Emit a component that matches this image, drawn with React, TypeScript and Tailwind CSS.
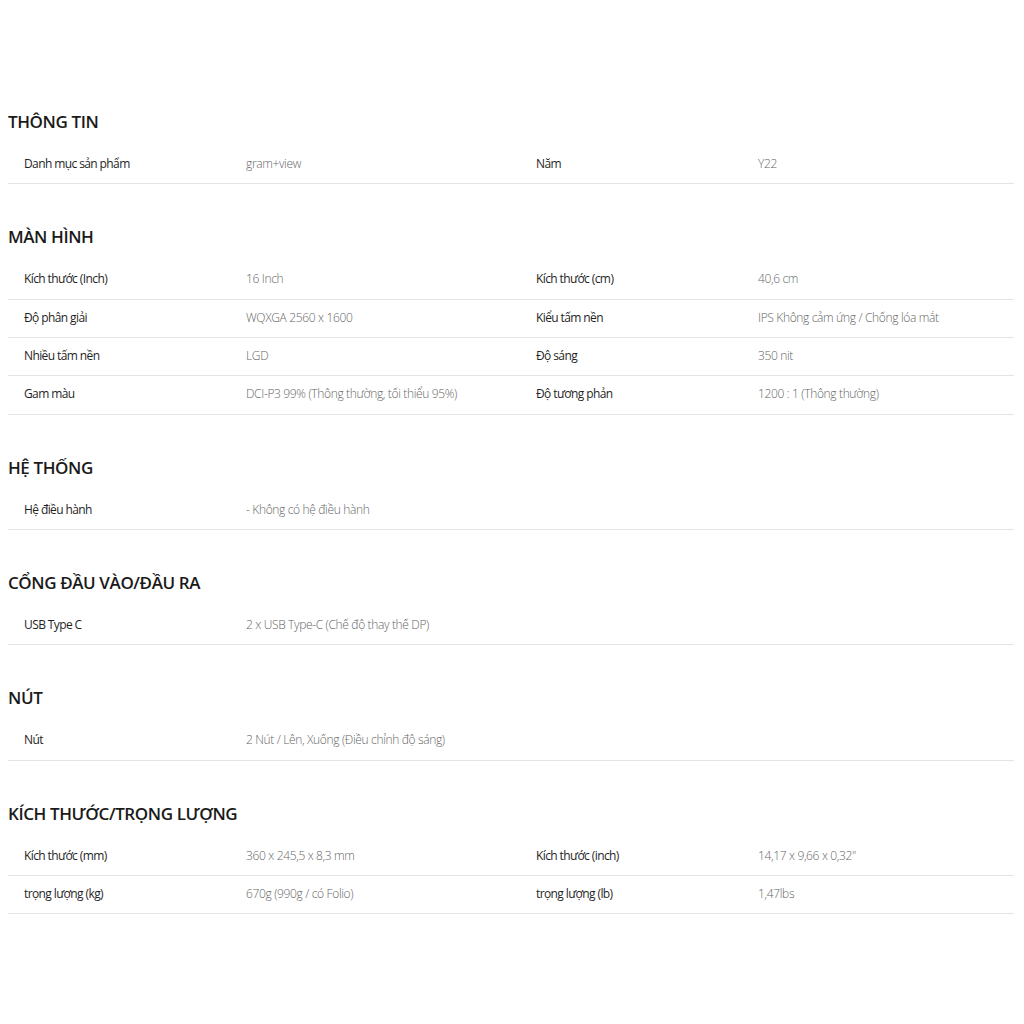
const font = { fontFamily: '"Open Sans", "Noto Sans", sans-serif' };

type Pair = [string, string];

const sections: { title: string; rows: Pair[][] }[] = [
  {
    title: 'THÔNG TIN',
    rows: [[['Danh mục sản phẩm', 'gram+view'], ['Năm', 'Y22']]],
  },
  {
    title: 'MÀN HÌNH',
    rows: [
      [['Kích thước (Inch)', '16 Inch'], ['Kích thước (cm)', '40,6 cm']],
      [['Độ phân giải', 'WQXGA 2560 x 1600'], ['Kiểu tấm nền', 'IPS Không cảm ứng / Chống lóa mắt']],
      [['Nhiều tấm nền', 'LGD'], ['Độ sáng', '350 nit']],
      [['Gam màu', 'DCI-P3 99% (Thông thường, tối thiểu 95%)'], ['Độ tương phản', '1200 : 1 (Thông thường)']],
    ],
  },
  {
    title: 'HỆ THỐNG',
    rows: [[['Hệ điều hành', '- Không có hệ điều hành']]],
  },
  {
    title: 'CỔNG ĐẦU VÀO/ĐẦU RA',
    rows: [[['USB Type C', '2 x USB Type-C (Chế độ thay thế DP)']]],
  },
  {
    title: 'NÚT',
    rows: [[['Nút', '2 Nút / Lên, Xuống (Điều chỉnh độ sáng)']]],
  },
  {
    title: 'KÍCH THƯỚC/TRỌNG LƯỢNG',
    rows: [
      [['Kích thước (mm)', '360 x 245,5 x 8,3 mm'], ['Kích thước (inch)', '14,17 x 9,66 x 0,32"']],
      [['trọng lượng (kg)', '670g (990g / có Folio)'], ['trọng lượng (lb)', '1,47lbs']],
    ],
  },
];

function Cell({ pair, right }: { pair?: Pair; right?: boolean }) {
  if (!pair) return <div />;
  return (
    <div className={`grid grid-cols-[222px_1fr] ${right ? 'pl-6' : 'pl-4'}`}>
      <div className="text-[12px] leading-5 font-medium tracking-[-0.6px] text-[#1f1f1f]">{pair[0]}</div>
      <div className="text-[12px] leading-5 font-light tracking-[-0.35px] text-[#666]">{pair[1]}</div>
    </div>
  );
}

export default function App() {
  return (
    <div className="min-h-screen bg-white px-2 pt-[110px] pb-24" style={font}>
      <div className="w-[1006px]">
        {sections.map((section, i) => (
          <section key={section.title} className={i > 0 ? 'mt-[41px]' : ''}>
            <h2 className="text-[17px] leading-6 font-semibold tracking-[-0.4px] text-[#1a1a1a]">{section.title}</h2>
            <div className="mt-3">
              {section.rows.map((row, j) => (
                <div
                  key={j}
                  className="grid grid-cols-[504px_1fr] border-b border-[#e4e4e4] pt-2 pb-[9.33px]"
                >
                  <Cell pair={row[0]} />
                  <Cell pair={row[1]} right />
                </div>
              ))}
            </div>
          </section>
        ))}
      </div>
    </div>
  );
}
